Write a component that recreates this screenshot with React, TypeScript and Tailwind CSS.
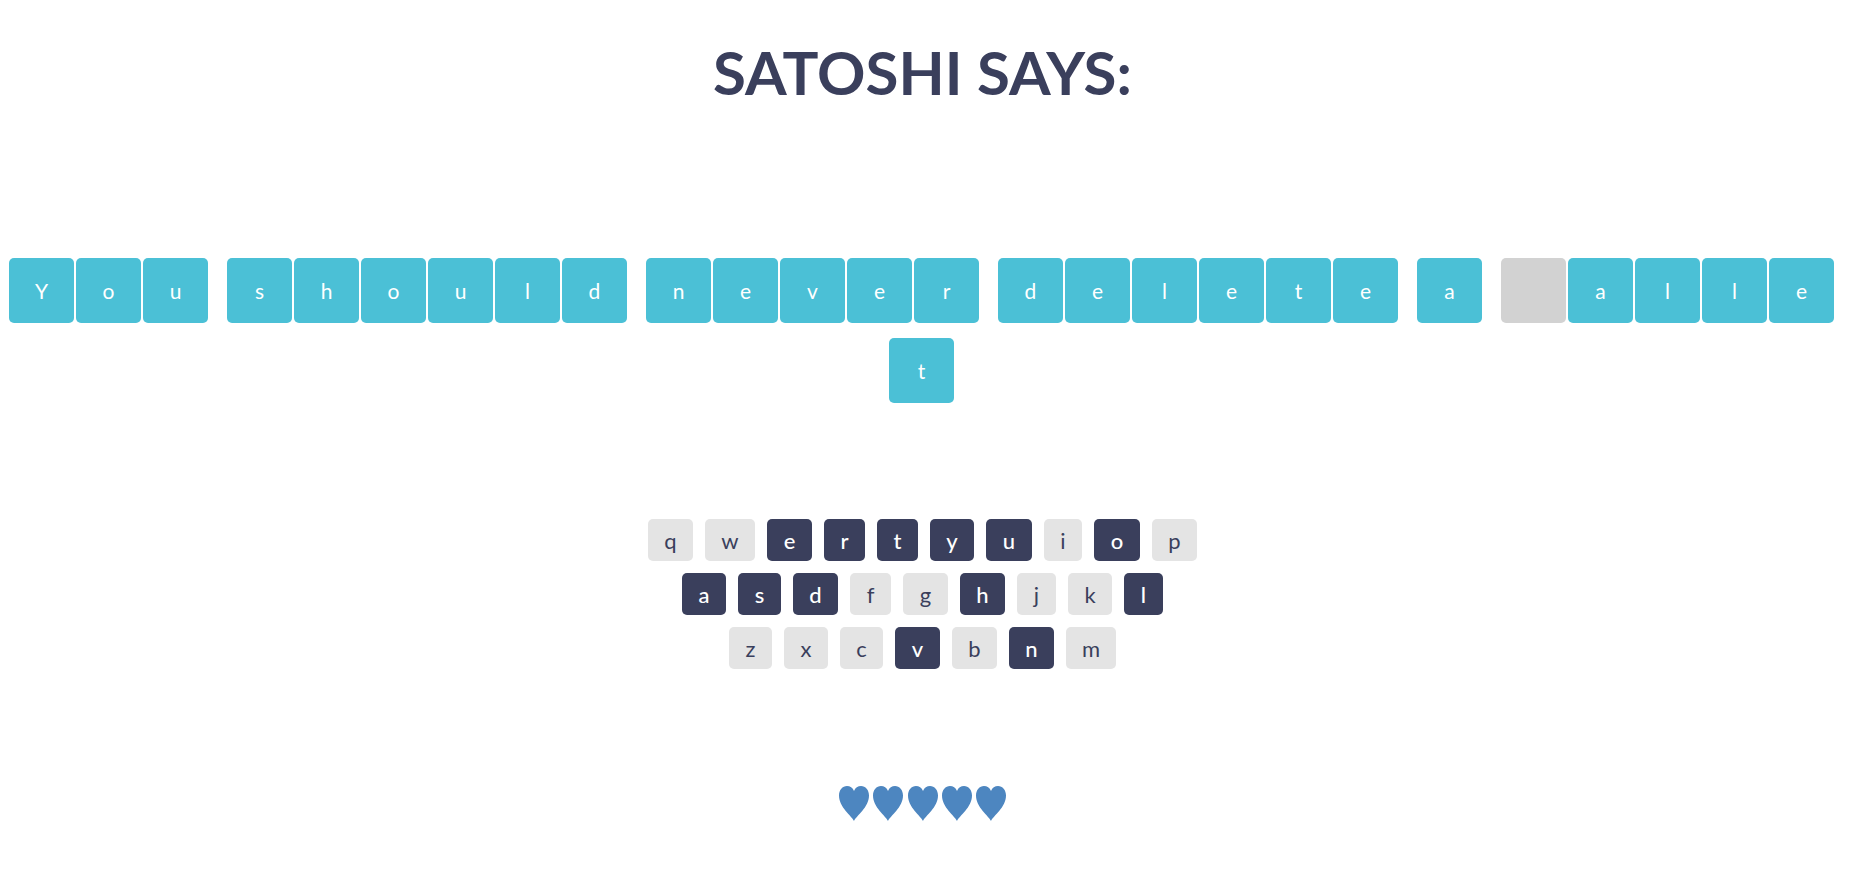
const words = ["You", "should", "never", "delete", "a", " allet"];
const rows = ["qwertyuiop", "asdfghjkl", "zxcvbnm"];
const used = "ertyuoasdhlvn";
const keyWidth: Record<string, string> = {
  q: "w-[45px]", w: "w-[50px]", e: "w-[45px]", r: "w-[41px]", t: "w-[41px]", y: "w-[44px]", u: "w-[46px]", i: "w-[38px]", o: "w-[46px]", p: "w-[45px]",
  a: "w-[44px]", s: "w-[43px]", d: "w-[45px]", f: "w-[41px]", g: "w-[45px]", h: "w-[45px]", j: "w-[39px]", k: "w-[44px]", l: "w-[39px]",
  z: "w-[43px]", x: "w-[44px]", c: "w-[43px]", v: "w-[45px]", b: "w-[45px]", n: "w-[45px]", m: "w-[50px]",
};

function Tile({ ch, gap }: { ch: string; gap: boolean }) {
  const blank = ch === " ";
  return (
    <div className={`ml-[1px] flex h-[65px] w-[65px] items-center justify-center rounded-[5px] text-[21px] text-white ${gap ? "mr-[18px]" : "mr-[1px]"} ${blank ? "bg-[#d2d2d2]" : "bg-[#4bc0d6]"}`}>
      {blank ? "" : ch}
    </div>
  );
}

function Heart() {
  return (
    <svg width="30" height="35" viewBox="0 0 30 35" className="shrink-0">
      <path d="M15 35 C12.5 29.5 0 21.5 0 9.5 C0 4 3.5 0 8 0 C11 0 13.8 1.8 15 5 C16.2 1.8 19 0 22 0 C26.5 0 30 4 30 9.5 C30 21.5 17.5 29.5 15 35 Z" fill="#4d86c0" />
    </svg>
  );
}

export default function App() {
  return (
    <div className="flex min-h-[893px] w-[1845px] flex-col items-center bg-white font-['Lato','Carlito','Liberation_Sans',sans-serif] text-[#3a3f5c]">
      <h1 className="mt-[36px] h-[72px] text-[60px] font-bold leading-[72px]">SATOSHI SAYS:</h1>
      <div className="mt-[150px] flex w-full flex-wrap justify-center gap-y-[15px] pr-[2px]">
        {words.flatMap((w, i) =>
          w.split("").map((c, j) => (
            <Tile key={`${i}-${j}`} ch={c} gap={j === w.length - 1 && i < words.length - 1} />
          ))
        )}
      </div>
      <div className="mt-[116px] flex flex-col items-center gap-[12px]">
        {rows.map((r) => (
          <div key={r} className="flex gap-[12px]">
            {r.split("").map((c) => (
              <div key={c} className={`flex h-[42px] items-center justify-center rounded-[5px] text-[22px] ${keyWidth[c]} ${used.includes(c) ? "bg-[#3a3f5c] font-medium text-white" : "bg-[#e4e4e4] text-[#3a3f5c]"}`}>
                {c}
              </div>
            ))}
          </div>
        ))}
      </div>
      <div className="mt-[117px] flex gap-[4.25px]">
        {[0, 1, 2, 3, 4].map((i) => (
          <Heart key={i} />
        ))}
      </div>
    </div>
  );
}
